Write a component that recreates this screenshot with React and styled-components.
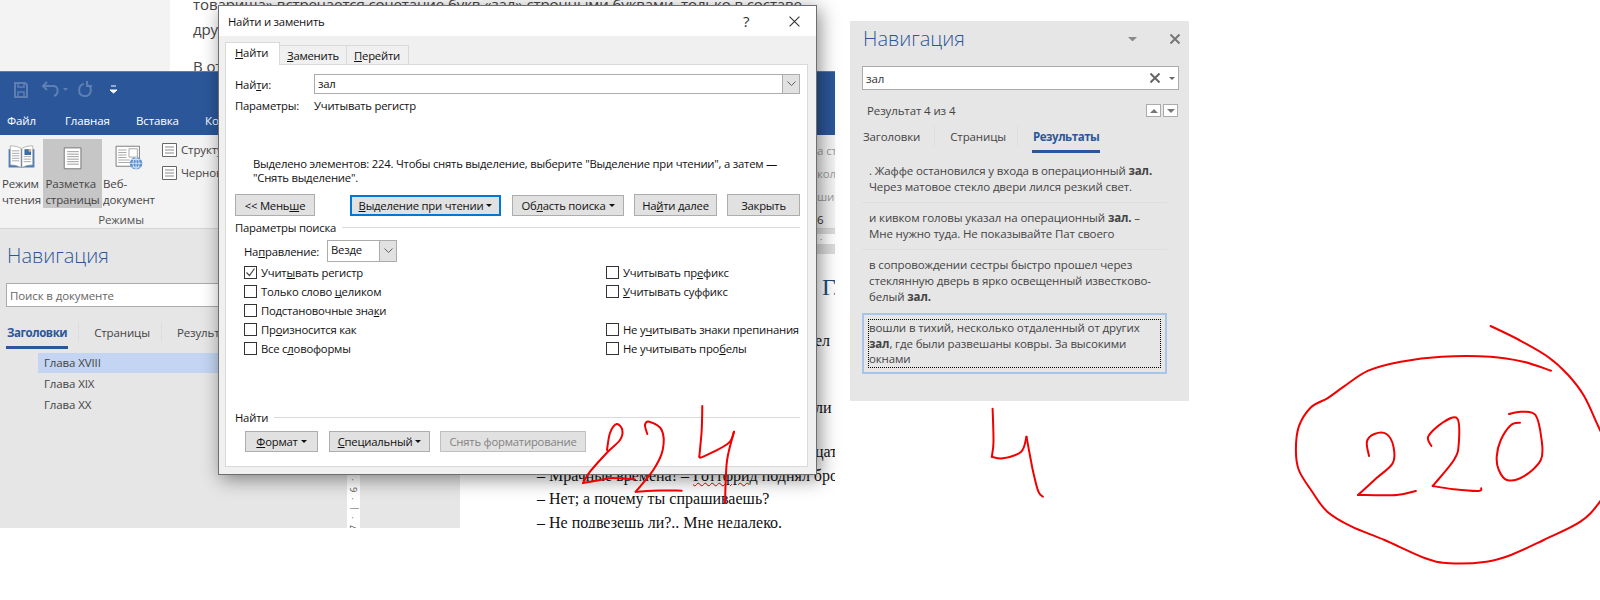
import React from "react";
import styled, { createGlobalStyle } from "styled-components";

const UI = `"Open Sans", "Noto Sans", sans-serif`;

const GlobalStyle = createGlobalStyle`
  html, body {
    margin: 0;
    background: #fff;
    font-family: ${UI};
    font-size: 11.5px;
    letter-spacing: -0.12px;
  }
  * { box-sizing: border-box; }
`;

const Desktop = styled.div`
  position: relative;
  width: 1600px;
  height: 600px;
  overflow: hidden;
  background: #fff;
`;

/* the scrap of the document above the word window */
const TopScrap = styled.div`
  position: absolute;
  left: 0;
  top: 0;
  width: 835px;
  height: 71px;
  display: flex;
  overflow: hidden;
`;
const TopGutter = styled.div`
  width: 170px;
  background: #f3f3f3;
`;
const TopText = styled.div`
  padding: 0 0 0 23px;
  margin-top: -7px;
  font-size: 15px;
  line-height: 22px;
  color: #444;
  white-space: nowrap;
  letter-spacing: -0.1px;
`;
const TopLine = styled.div`
  margin-bottom: ${(p) => p.$after || 0}px;
`;

const WordWindow = styled.div`
  position: absolute;
  left: 0;
  top: 71px;
  width: 835px;
  height: 457px;
  display: flex;
  flex-direction: column;
  overflow: hidden;
  background: #e6e6e6;
`;
const TitleBand = styled.div`
  height: 64px;
  flex: none;
  background: #2b579a;
  border-top: 1px solid #6f7a8a;
  display: flex;
  flex-direction: column;
`;
const Qat = styled.div`
  height: 32px;
  display: flex;
  align-items: center;
  padding: 3px 0 0 13px;
  color: #5f7fb2;
`;
const MenuRow = styled.div`
  display: flex;
  padding-top: 8px;
`;
const MenuItem = styled.div`
  width: ${(p) => p.$w}px;
  padding-left: ${(p) => p.$pad || 0}px;
  color: #fff;
  line-height: 18px;
  white-space: nowrap;
`;
const Ribbon = styled.div`
  height: 94px;
  flex: none;
  background: #f3f3f3;
  border-bottom: 1px solid #d4d4d4;
  display: flex;
  padding-top: 4px;
  position: relative;
`;
const ViewGroup = styled.div`
  width: 156px;
  display: flex;
  flex-direction: column;
  align-items: stretch;
`;
const ViewButtons = styled.div`
  display: flex;
  height: 69px;
`;
const ViewButton = styled.div`
  width: ${(p) => p.$w}px;
  background: ${(p) => (p.$on ? "#c6c6c6" : "transparent")};
  display: flex;
  flex-direction: column;
  align-items: center;
  padding-top: 6px;
  color: #444;
  line-height: 16px;
  white-space: nowrap;
  svg { height: 30px; margin-bottom: 6px; }
`;
const GroupName = styled.div`
  text-align: center;
  color: #555;
  line-height: 16px;
  margin-top: 4px;
  padding-left: 86px;
  white-space: nowrap;
`;
const SmallViews = styled.div`
  margin-left: 6px;
  display: flex;
  flex-direction: column;
  gap: 8px;
  padding-top: 3px;
  flex: 1;
`;
const SmallView = styled.div`
  display: flex;
  align-items: center;
  gap: 4px;
  height: 15px;
  color: #444;
  white-space: nowrap;
`;
const RibbonEdge = styled.div`
  position: absolute;
  left: 817px;
  top: 0;
  width: 18px;
  overflow: hidden;
  color: #9a9a9a;
  line-height: 23px;
  padding-top: 4px;
  white-space: nowrap;
`;
const RibbonEdgeDark = styled.div`
  color: #333;
`;

const WorkArea = styled.div`
  flex: 1;
  display: flex;
  min-height: 0;
`;
const SideNav = styled.div`
  width: 342px;
  flex: none;
  padding: 14px 0 0 6px;
  display: flex;
  flex-direction: column;
  background: #e6e6e6;
`;
const NavHeading = styled.div`
  font-size: 20px;
  font-weight: 300;
  letter-spacing: 0;
  color: #2b579a;
  line-height: 26px;
  padding-left: 1px;
`;
const SearchBox = styled.div`
  height: 24px;
  width: ${(p) => p.$w}px;
  margin-top: ${(p) => p.$top}px;
  background: #fff;
  border: 1px solid #ababab;
  display: flex;
  align-items: center;
  padding-left: 3px;
  color: ${(p) => (p.$hint ? "#666" : "#333")};
`;
const SearchTools = styled.div`
  display: flex;
  align-items: center;
  gap: 9px;
  margin-right: 3px;
`;
const NavTabs = styled.div`
  display: flex;
  margin-top: ${(p) => p.$top}px;
  color: #444;
`;
const NavTab = styled.div`
  height: 27px;
  padding: 2px 1px 0;
  line-height: 17px;
  font-weight: ${(p) => (p.$on ? 700 : 400)};
  letter-spacing: ${(p) => (p.$on ? "-0.45px" : "-0.12px")};
  color: ${(p) => (p.$on ? "#2b579a" : "#444")};
  border-bottom: 3px solid ${(p) => (p.$on ? "#2b579a" : "transparent")};
  white-space: nowrap;
`;
const NavSep = styled.div`
  width: 1px;
  height: 20px;
  margin: 0 ${(p) => p.$r}px 0 ${(p) => p.$l}px;
  background: #dedede;
`;
const HeadingList = styled.div`
  margin: 4px 0 0 32px;
  color: #444;
`;
const HeadingRow = styled.div`
  height: 20px;
  margin-bottom: 1px;
  line-height: 20px;
  padding-left: 6px;
  background: ${(p) => (p.$on ? "#c3d5f2" : "transparent")};
`;

const RulerStrip = styled.div`
  width: 118px;
  flex: none;
  display: flex;
  padding-left: 5px;
  background: #e6e6e6;
`;
const VerticalRuler = styled.div`
  width: 13px;
  background: #fff;
  display: flex;
  flex-direction: column;
  justify-content: flex-end;
  align-items: center;
  margin-bottom: -4px;
  overflow: hidden;
`;
const RulerMark = styled.div`
  height: 9.5px;
  flex: none;
  display: flex;
  align-items: center;
  justify-content: center;
  font-size: 9px;
  color: #555;
  transform: rotate(-90deg);
`;
const PageColumn = styled.div`
  flex: 1;
  display: flex;
  flex-direction: column;
  min-width: 0;
`;
const TopRuler = styled.div`
  height: 25px;
  flex: none;
  padding: 5px 0 10px;
  background: #dcdcdc;
`;
const TopRulerWhite = styled.div`
  height: 10px;
  background: #fff;
  color: #444;
  font-size: 8px;
  line-height: 10px;
  text-align: right;
  padding-right: 5px;
  letter-spacing: 8px;
`;
const DocPage = styled.div`
  flex: 1;
  background: #fff;
  overflow: hidden;
  font-family: "Liberation Serif", serif;
  font-size: 16px;
  letter-spacing: 0;
  color: #111;
`;
const DocLine = styled.div`
  height: 24px;
  line-height: 24px;
  margin-top: ${(p) => p.$top || 0}px;
  padding-left: ${(p) => p.$left}px;
  white-space: nowrap;
  font-size: ${(p) => (p.$head ? 24 : 16)}px;
  color: ${(p) => (p.$head ? "#1f4d78" : "#111")};
`;
const Misspelled = styled.span`
  text-decoration: underline wavy #e00000 1px;
`;

/* find and replace dialog */
const Dialog = styled.div`
  position: absolute;
  left: 218px;
  top: 5px;
  width: 599px;
  height: 470px;
  background: #f0f0f0;
  border: 1px solid #6e6e6e;
  box-shadow: 3px 4px 18px rgba(0, 0, 0, 0.45);
  display: flex;
  flex-direction: column;
  color: #111;
  font-size: 11.3px;
  letter-spacing: -0.22px;
`;
const DialogTitle = styled.div`
  height: 30px;
  flex: none;
  background: #fff;
  display: flex;
  align-items: center;
  padding: 0 16px 0 9px;
`;
const DialogName = styled.div`
  flex: 1;
`;
const Help = styled.div`
  font-size: 15px;
  width: 46px;
  color: #333;
`;
const TabStrip = styled.div`
  display: flex;
  align-items: flex-end;
  padding: 7px 0 0 6px;
  height: 29px;
  flex: none;
  position: relative;
  z-index: 1;
`;
const DialogTab = styled.div`
  width: ${(p) => p.$w}px;
  height: ${(p) => (p.$on ? 23 : 20)}px;
  background: ${(p) => (p.$on ? "#fff" : "#f0f0f0")};
  border: 1px solid #d9d9d9;
  border-bottom: ${(p) => (p.$on ? "none" : "1px solid #d9d9d9")};
  border-left-width: ${(p) => (p.$on ? 1 : 0)}px;
  padding-left: ${(p) => (p.$on ? 9 : 7)}px;
  line-height: 20px;
  white-space: nowrap;
`;
const DialogPanel = styled.div`
  margin: -1px 0 0 6px;
  width: 583px;
  height: 403px;
  background: #fff;
  border: 1px solid #d9d9d9;
  padding: 9px 7px 0 9px;
  display: flex;
  flex-direction: column;
`;
const FieldRow = styled.div`
  display: flex;
  align-items: center;
  height: ${(p) => p.$h}px;
  margin-top: ${(p) => p.$top || 0}px;
  white-space: nowrap;
`;
const FieldLabel = styled.div`
  width: ${(p) => p.$w}px;
  padding-left: ${(p) => p.$pad || 0}px;
  flex: none;
`;
const Combo = styled.div`
  display: flex;
  align-items: stretch;
  width: ${(p) => p.$w}px;
  height: ${(p) => p.$h}px;
  background: #fff;
  border: 1px solid #acacac;
`;
const ComboText = styled.div`
  flex: 1;
  padding-left: 3px;
  line-height: 17px;
`;
const ComboArrow = styled.div`
  width: 17px;
  background: #e1e1e1;
  border-left: 1px solid #acacac;
  display: flex;
  align-items: center;
  justify-content: center;
`;
const Message = styled.div`
  margin-top: 43px;
  padding-left: 18px;
  line-height: 13.5px;
  white-space: nowrap;
`;
const ButtonRow = styled.div`
  display: flex;
  align-items: center;
  margin: ${(p) => p.$top}px 0 0 ${(p) => p.$left || 0}px;
`;
const DlgButton = styled.div`
  width: ${(p) => p.$w}px;
  height: ${(p) => p.$h || 21}px;
  margin-left: ${(p) => p.$gap || 0}px;
  background: #e1e1e1;
  border: ${(p) => (p.$primary ? "2px solid #0078d7" : p.$off ? "1px solid #bfbfbf" : "1px solid #adadad")};
  color: ${(p) => (p.$off ? "#838383" : "#111")};
  display: flex;
  align-items: center;
  justify-content: center;
  gap: 3px;
  white-space: nowrap;
`;
const Caret = styled.span`
  width: 0;
  height: 0;
  border-left: 3px solid transparent;
  border-right: 3px solid transparent;
  border-top: 3px solid #111;
`;
const GroupHead = styled.div`
  display: flex;
  align-items: center;
  gap: 6px;
  margin-top: ${(p) => p.$top}px;
  height: 16px;
  white-space: nowrap;
`;
const GroupRule = styled.div`
  flex: 1;
  height: 1px;
  background: #d9d9d9;
`;
const OptionGrid = styled.div`
  display: grid;
  grid-template-columns: 362px 1fr;
  grid-auto-rows: 19px;
  margin: 1px 0 0 9px;
`;
const Option = styled.div`
  display: flex;
  align-items: center;
  gap: 4px;
  white-space: nowrap;
`;
const CheckBox = styled.span`
  width: 13px;
  height: 13px;
  flex: none;
  border: 1px solid #333;
  background: #fff;
  display: flex;
  align-items: center;
  justify-content: center;
`;

/* results pane on the right */
const ResultsPane = styled.div`
  position: absolute;
  left: 850px;
  top: 21px;
  width: 339px;
  height: 380px;
  background: #e6e6e6;
  padding: 5px 0 0 12px;
  color: #444;
`;
const PaneHead = styled.div`
  display: flex;
  align-items: center;
  height: 26px;
  padding-right: 9px;
  gap: 33px;
`;
const PaneTitle = styled(NavHeading)`
  flex: 1;
`;
const QueryText = styled.div`
  flex: 1;
`;
const CountRow = styled.div`
  display: flex;
  align-items: center;
  width: 316px;
  height: 15px;
  margin-top: 13px;
  padding-left: 5px;
  gap: 2px;
`;
const CountText = styled.div`
  flex: 1;
`;
const Stepper = styled.div`
  width: 15px;
  height: 13px;
  background: #fff;
  border: 1px solid #ababab;
  display: flex;
  align-items: center;
  justify-content: center;
`;
const StepArrow = styled.span`
  width: 0;
  height: 0;
  border-left: 4px solid transparent;
  border-right: 4px solid transparent;
  ${(p) => (p.$up ? "border-bottom: 4px solid #777;" : "border-top: 4px solid #777;")}
`;
const ResultList = styled.div`
  width: 305px;
  margin-top: 3px;
`;
const ResultItem = styled.div`
  padding: 7px 0 7px 7px;
  line-height: 16px;
  white-space: nowrap;
  border-bottom: ${(p) => (p.$last ? "none" : "1px solid #dedede")};
`;
const ActiveResult = styled.div`
  margin-top: 1px;
  height: 61px;
  border: 2px solid #a9c4e9;
  padding: 4px;
`;
const FocusRing = styled.div`
  height: 49px;
  border: 1px dotted #000;
  line-height: 15.5px;
  white-space: nowrap;
`;

const Scribbles = styled.svg`
  position: absolute;
  left: 0;
  top: 0;
  width: 1600px;
  height: 600px;
  pointer-events: none;
  fill: none;
  stroke: #f00000;
  stroke-width: 2;
  stroke-linejoin: round;
  stroke-linecap: round;
`;

// catmull-rom through the hand drawn points
const smooth = (str) => {
  const pts = str.trim().split(/\s+/).map((p) => p.split(",").map(Number));
  let d = `M${pts[0][0]} ${pts[0][1]}`;
  for (let i = 0; i < pts.length - 1; i++) {
    const a = pts[i - 1] || pts[i];
    const b = pts[i];
    const c = pts[i + 1];
    const e = pts[i + 2] || c;
    const c1 = [b[0] + (c[0] - a[0]) / 6, b[1] + (c[1] - a[1]) / 6];
    const c2 = [c[0] - (e[0] - b[0]) / 6, c[1] - (e[1] - b[1]) / 6];
    d += `C${c1[0].toFixed(1)} ${c1[1].toFixed(1)} ${c2[0].toFixed(1)} ${c2[1].toFixed(1)} ${c[0]} ${c[1]}`;
  }
  return d;
};

const strokes = [
  // 224
  "607,450 610,433 616.7,424 622.3,430 620,440 606.7,453 590,471.7 583,483",
  "583,483 600,480 613,478 635,479.5",
  "647.3,434 645,425 649.3,421.7 661.7,430 662.7,450 653.3,470 635.7,491.7",
  "635.7,491.7 660,490.5 681.7,490.7",
  "702.3,406 701.7,430 699.3,456.7",
  "699.3,456.7 703.3,456.7 728.3,443.3 734,431.7",
  "734,431.7 731.7,440 726.7,463.3 725,503",
  // 4
  "992.6,408.7 993.5,441.7 991.8,456.7",
  "991.8,456.7 1002.9,458.3 1021.2,451.7 1026.5,436.7",
  "1026.5,436.7 1030.2,456.7 1033.5,473.3 1038.4,491.7 1042.9,496.7",
  // circle round 220
  "1490.6,326 1519.2,340 1547.8,356.7 1568.2,375 1584.5,396.7 1600,430 1620,470 1600,501.7 1580.4,521.7 1543.7,540 1511,555 1486.5,561.7 1449.8,563.3 1425.3,558.3 1384.5,540 1351.8,526.7 1327.3,511.7 1311,490 1298.8,470 1295.9,450 1298.8,426.7 1311,407.3 1327.3,398.3 1343.7,386.7 1368.2,370.7 1400.8,361.7 1441.6,356.7 1490.6,356.7 1523.3,361.7 1551,370.7",
  // 220
  "1369,456 1366.9,441.7 1374.3,434 1386.5,434 1393.5,446.7 1392.7,463.3 1376.3,478.3 1358,495",
  "1358,495 1396.7,495 1415.9,491",
  "1431.4,446 1428.2,436.7 1441.6,423.3 1457.1,418.3 1458.8,443.3 1453.9,460 1432.7,486",
  "1432.7,486 1453.9,489.3 1478.4,491 1481.2,488.3",
  "1509,414 1521.2,411.7 1535.5,415 1541.6,440 1540.8,460 1523.3,476.7 1506.9,480 1498.8,470 1496.7,456.7 1500.8,440 1511,425 1520,422.7",
];

const Arrow = () => (
  <svg width="9" height="6" viewBox="0 0 9 6">
    <polyline points="0.5,0.5 4.5,4.5 8.5,0.5" fill="none" stroke="#606060" strokeWidth="1" />
  </svg>
);

const BookIcon = () => (
  <svg width="31" viewBox="0 0 31 30">
    <path d="M0 5h31v22H0z" fill="#4a7ebb" />
    <path d="M2 1c5 0 9 1 13 3v23c-4-2-8-3-13-3zM29 1c-5 0-9 1-13 3v23c4-2 8-3 13-3z" fill="#fff" stroke="#8a8a8a" strokeWidth=".7" />
    <path d="M4 7h9M4 10h9M4 13h9M4 16h9M4 19h9M18 14h9M18 17h9M18 20h9" stroke="#9a9a9a" fill="none" />
    <path d="M19 5h8v7h-8z" fill="#3b6ea8" />
    <path d="M24 5h3v3h-3z" fill="#f0b070" />
  </svg>
);
const PageIcon = () => (
  <svg width="22" viewBox="0 0 22 30">
    <path d="M.5 3.5h20v25H.5z" fill="#fff" stroke="#666" />
    <path d="M4 8h14M4 11h14M4 14h14M4 17h14M4 20h14M4 23h14" stroke="#8a8a8a" />
  </svg>
);
const WebIcon = () => (
  <svg width="32" viewBox="0 0 32 30">
    <path d="M.5 1.5h28v24H.5z" fill="#fff" stroke="#666" />
    <path d="M16 4.5h10v10H16z" fill="#fff" stroke="#999" />
    <path d="M3 6h10M3 9h10M3 12h10M3 15h10M3 18h14M3 21h14" stroke="#9a9a9a" />
    <circle cx="24.5" cy="22" r="7.5" fill="#5b8fd0" />
    <path d="M17 22h15M24.5 14.5v15M19 17.5h11M19 26.5h11M24.5 14.5c-5 4-5 11 0 15M24.5 14.5c5 4 5 11 0 15" stroke="#fff" strokeWidth=".8" fill="none" />
  </svg>
);
const SmallPageIcon = () => (
  <svg width="15" height="14" viewBox="0 0 15 14">
    <path d="M.5.5h14v13H.5z" fill="#fff" stroke="#666" />
    <path d="M3 4h9M3 7h9M3 10h9" stroke="#8a8a8a" />
  </svg>
);
const QatIcons = () => (
  <svg width="110" height="18" viewBox="0 0 110 18" fill="none" stroke="currentColor">
    <path d="M2 2h10l2 2v12H2z" strokeWidth="2" />
    <path d="M5 2v4h6V2M5 16v-5h6v5" strokeWidth="1.5" />
    <path d="M34 1l-4 4 4 4M31 5h9c6 0 6 8 1 10" strokeWidth="2" />
    <path d="M50 7h5l-2.500 3z" fill="currentColor" stroke="none" />
    <path d="M71 3c-6 1-7 11 0 12s9-8 4-11M74 0v5h5" strokeWidth="2" />
    <path d="M98 5h5M97 9h7l-3.500 3z" stroke="#fff" fill="#fff" strokeWidth="1" />
  </svg>
);
const Check = () => (
  <svg width="11" height="11" viewBox="0 0 11 11">
    <polyline points="1.5,5.5 4.5,8.5 9.5,1.5" fill="none" stroke="#444" strokeWidth="1.2" />
  </svg>
);
const Cross = ({ size, color, width }) => (
  <svg width={size} height={size} viewBox="0 0 10 10">
    <path d="M0.5 0.5L9.5 9.5M9.5 0.5L0.5 9.5" stroke={color} strokeWidth={width} fill="none" />
  </svg>
);
const SmallDown = ({ size, color }) => (
  <svg width={size} height={size / 2} viewBox="0 0 10 5">
    <path d="M0 0h10L5 5z" fill={color} />
  </svg>
);

const optionRows = [
  [<>Учит<u>ы</u>вать регистр</>, <>Учитывать пр<u>е</u>фикс</>, true],
  [<>Только слово <u>ц</u>еликом</>, <><u>У</u>читывать суффикс</>],
  [<>Подстановочные зна<u>к</u>и</>, null],
  [<>Пр<u>о</u>износится как</>, <>Не у<u>ч</u>итывать знаки препинания</>],
  [<>Все с<u>л</u>овоформы</>, <>Не учитывать про<u>б</u>елы</>],
];

const App = () => (
  <Desktop>
    <GlobalStyle />
    <TopScrap>
      <TopGutter />
      <TopText>
        <TopLine $after={3}>товарища» встречается сочетание букв «зал» строчными буквами, только в составе</TopLine>
        <TopLine $after={15}>других</TopLine>
        <TopLine>В отчёте</TopLine>
      </TopText>
    </TopScrap>

    <WordWindow>
      <TitleBand>
        <Qat><QatIcons /></Qat>
        <MenuRow>
          <MenuItem $w={65} $pad={7}>Файл</MenuItem>
          <MenuItem $w={71}>Главная</MenuItem>
          <MenuItem $w={69}>Вставка</MenuItem>
          <MenuItem $w={60}>Конструктор</MenuItem>
        </MenuRow>
      </TitleBand>
      <Ribbon>
        <ViewGroup>
          <ViewButtons>
            <ViewButton $w={43}><BookIcon />Режим<br />чтения</ViewButton>
            <ViewButton $w={59} $on><PageIcon />Разметка<br />страницы</ViewButton>
            <ViewButton $w={54}><WebIcon />Веб-<br />документ</ViewButton>
          </ViewButtons>
          <GroupName>Режимы</GroupName>
        </ViewGroup>
        <SmallViews>
          <SmallView><SmallPageIcon />Структура</SmallView>
          <SmallView><SmallPageIcon />Черновик</SmallView>
        </SmallViews>
        <RibbonEdge>
          <div>а ст</div>
          <div>кол</div>
          <div>шир</div>
          <RibbonEdgeDark>6</RibbonEdgeDark>
        </RibbonEdge>
      </Ribbon>
      <WorkArea>
        <SideNav>
          <NavHeading>Навигация</NavHeading>
          <SearchBox $w={330} $top={14} $hint>Поиск в документе</SearchBox>
          <NavTabs $top={15}>
            <NavTab $on>Заголовки</NavTab>
            <NavSep $l={10} $r={14} />
            <NavTab>Страницы</NavTab>
            <NavSep $l={10} $r={14} />
            <NavTab>Результаты</NavTab>
          </NavTabs>
          <HeadingList>
            <HeadingRow $on>Глава XVIII</HeadingRow>
            <HeadingRow>Глава XIX</HeadingRow>
            <HeadingRow>Глава XX</HeadingRow>
          </HeadingList>
        </SideNav>
        <RulerStrip>
          <VerticalRuler>
            <RulerMark>·</RulerMark>
            <RulerMark>6</RulerMark>
            <RulerMark>·</RulerMark>
            <RulerMark>|</RulerMark>
            <RulerMark>·</RulerMark>
            <RulerMark>7</RulerMark>
          </VerticalRuler>
        </RulerStrip>
        <PageColumn>
          <TopRuler><TopRulerWhite>· ·</TopRulerWhite></TopRuler>
          <DocPage>
            <DocLine $top={21} $left={362} $head>Глава</DocLine>
            <DocLine $top={30} $left={355}>ел</DocLine>
            <DocLine $top={43} $left={355}>ли</DocLine>
            <DocLine $top={20} $left={355}>цать</DocLine>
            <DocLine $left={77}>– Мрачные времена! – <Misspelled>Готтфрид</Misspelled> поднял брови.</DocLine>
            <DocLine $top={-1} $left={77}>– Нет; а почему ты спрашиваешь?</DocLine>
            <DocLine $left={77}>– Не подвезешь ли?.. Мне недалеко.</DocLine>
          </DocPage>
        </PageColumn>
      </WorkArea>
    </WordWindow>

    <Dialog>
      <DialogTitle>
        <DialogName>Найти и заменить</DialogName>
        <Help>?</Help>
        <Cross size={11} color="#333" width={1} />
      </DialogTitle>
      <TabStrip>
        <DialogTab $w={55} $on><u>Н</u>айти</DialogTab>
        <DialogTab $w={67}><u>З</u>аменить</DialogTab>
        <DialogTab $w={62}><u>П</u>ерейти</DialogTab>
      </TabStrip>
      <DialogPanel>
        <FieldRow $h={20}>
          <FieldLabel $w={79}>Най<u>т</u>и:</FieldLabel>
          <Combo $w={488} $h={20}>
            <ComboText>зал</ComboText>
            <ComboArrow><Arrow /></ComboArrow>
          </Combo>
        </FieldRow>
        <FieldRow $h={18} $top={2}>
          <FieldLabel $w={79}>Параметры:</FieldLabel>
          <span>Учитывать регистр</span>
        </FieldRow>
        <Message>
          Выделено элементов: 224. Чтобы снять выделение, выберите "Выделение при чтении", а затем —<br />
          "Снять выделение".
        </Message>
        <ButtonRow $top={10}>
          <DlgButton $w={80} $h={22}><span>&lt;&lt; Мень<u>ш</u>е</span></DlgButton>
          <DlgButton $w={151} $gap={35} $primary><span><u>В</u>ыделение при чтении</span><Caret /></DlgButton>
          <DlgButton $w={112} $gap={11}><span>Об<u>л</u>асть поиска</span><Caret /></DlgButton>
          <DlgButton $w={83} $gap={10} $h={22}><span>На<u>й</u>ти далее</span></DlgButton>
          <DlgButton $w={73} $gap={10} $h={22}>Закрыть</DlgButton>
        </ButtonRow>
        <GroupHead $top={3}>Параметры поиска<GroupRule /></GroupHead>
        <FieldRow $h={22} $top={5}>
          <FieldLabel $w={92} $pad={9}>На<u>п</u>равление:</FieldLabel>
          <Combo $w={70} $h={22}>
            <ComboText>Везде</ComboText>
            <ComboArrow><Arrow /></ComboArrow>
          </Combo>
        </FieldRow>
        <OptionGrid>
          {optionRows.map(([left, right, checked], i) => (
            <React.Fragment key={i}>
              <Option><CheckBox>{checked && <Check />}</CheckBox><span>{left}</span></Option>
              {right ? <Option><CheckBox /><span>{right}</span></Option> : <div />}
            </React.Fragment>
          ))}
        </OptionGrid>
        <GroupHead $top={51}>Найти<GroupRule /></GroupHead>
        <ButtonRow $top={6} $left={10}>
          <DlgButton $w={73}><span><u>Ф</u>ормат</span><Caret /></DlgButton>
          <DlgButton $w={101} $gap={11}><span><u>С</u>пециальный</span><Caret /></DlgButton>
          <DlgButton $w={146} $gap={10} $off>Снять форматирование</DlgButton>
        </ButtonRow>
      </DialogPanel>
    </Dialog>

    <ResultsPane>
      <PaneHead>
        <PaneTitle>Навигация</PaneTitle>
        <SmallDown size={9} color="#8a8a8a" />
        <Cross size={10} color="#777" width={2} />
      </PaneHead>
      <SearchBox $w={317} $top={14}>
        <QueryText>зал</QueryText>
        <SearchTools>
          <Cross size={10} color="#666" width={2} />
          <SmallDown size={6} color="#666" />
        </SearchTools>
      </SearchBox>
      <CountRow>
        <CountText>Результат 4 из 4</CountText>
        <Stepper><StepArrow $up /></Stepper>
        <Stepper><StepArrow /></Stepper>
      </CountRow>
      <NavTabs $top={8}>
        <NavTab>Заголовки</NavTab>
        <NavSep $l={13} $r={14} />
        <NavTab>Страницы</NavTab>
        <NavSep $l={10} $r={14} />
        <NavTab $on>Результаты</NavTab>
      </NavTabs>
      <ResultList>
        <ResultItem>. Жаффе остановился у входа в операционный <b>зал.</b><br />Через матовое стекло двери лился резкий свет.</ResultItem>
        <ResultItem>и кивком головы указал на операционный <b>зал.</b> –<br />Мне нужно туда. Не показывайте Пат своего</ResultItem>
        <ResultItem $last>в сопровождении сестры быстро прошел через<br />стеклянную дверь в ярко освещенный известково-<br />белый <b>зал.</b></ResultItem>
        <ActiveResult>
          <FocusRing>вошли в тихий, несколько отдаленный от других<br /><b>зал</b>, где были развешаны ковры. За высокими<br />окнами</FocusRing>
        </ActiveResult>
      </ResultList>
    </ResultsPane>

    <Scribbles viewBox="0 0 1600 600">
      {strokes.map((s, i) => <path key={i} d={smooth(s)} />)}
    </Scribbles>
  </Desktop>
);

export default App;
